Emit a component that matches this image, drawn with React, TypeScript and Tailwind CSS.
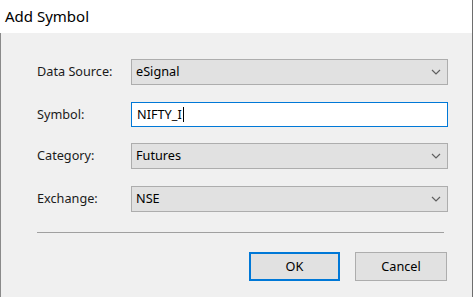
import type { ReactNode } from 'react';

const font = { fontFamily: '"Noto Sans", "Open Sans", Arial, sans-serif' };

function Chevron() {
  return (
    <svg width="10" height="6" viewBox="0 0 10 6" className="text-[#606060]" aria-hidden>
      <path d="M1 1 L5 5 L9 1" fill="none" stroke="currentColor" strokeWidth="1.2" />
    </svg>
  );
}

function Row({ label, className, children }: { label: string; className?: string; children: ReactNode }) {
  return (
    <div className={`flex items-center ${className ?? ''}`}>
      <div className="w-[94px] text-[12.7px] text-[#1b1b1b]">{label}</div>
      {children}
    </div>
  );
}

function Combo({ value }: { value: string }) {
  return (
    <div className="flex h-[26px] w-[317px] items-center justify-between border border-[#adadad] bg-[#e1e1e1] pl-[4px] pr-[6px] text-[12.7px] text-black">
      <span>{value}</span>
      <Chevron />
    </div>
  );
}

export default function App() {
  return (
    <div className="h-[297px] w-[473px] border-r border-[#6e6e6e] bg-[#f0f0f0]" style={font}>
      <div className="flex h-[33px] items-center bg-white pl-[5px] text-[15px] text-black">
        Add Symbol
      </div>
      <div className="h-[264px] border-l border-[#8a8a8a] pl-[36px] pt-[26px]">
        <div className="flex flex-col">
          <Row label="Data Source:">
            <Combo value="eSignal" />
          </Row>
          <Row label="Symbol:" className="mt-[17px]">
            <div className="flex h-[25px] w-[317px] items-center border border-[#0078d7] bg-white pl-[5px] text-[12.7px] text-black">
              <span>NIFTY_I</span>
              <span className="ml-[1px] inline-block h-[15px] w-px bg-black" />
            </div>
          </Row>
          <Row label="Category:" className="mt-[16px]">
            <Combo value="Futures" />
          </Row>
          <Row label="Exchange:" className="mt-[17px]">
            <Combo value="NSE" />
          </Row>
        </div>
        <div className="mt-[20px] h-px w-[407px] bg-[#a0a0a0]" />
        <div className="mt-[19px] flex w-[410px] justify-end gap-[15px]">
          <button className="h-[29px] w-[91px] border-2 border-[#0078d7] bg-[#e1e1e1] text-[12.7px] text-black">
            OK
          </button>
          <button className="h-[29px] w-[92px] border border-[#adadad] bg-[#e1e1e1] text-[12.7px] text-black">
            Cancel
          </button>
        </div>
      </div>
    </div>
  );
}
